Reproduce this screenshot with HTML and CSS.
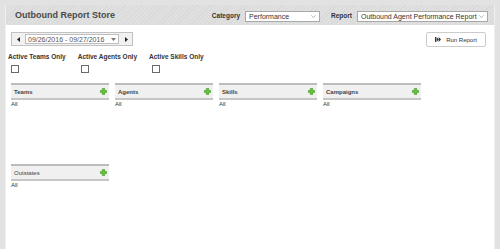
FILE: index.html
```html
<!DOCTYPE html>
<html lang="en">
<head>
  <meta charset="UTF-8">
  <meta name="viewport" content="width=device-width, initial-scale=1.0">
  <title>Outbound Report Store</title>
  <link rel="stylesheet" href="styles.css">
</head>
<body>
  <div class="page">
    <!-- Header -->
    <header class="store-header">
      <h1>Outbound Report Store</h1>
      <div class="pickers">
        <span class="pick-label">Category</span>
        <div class="select select-category">
          <span>Performance</span>
          <svg class="chev" width="5" height="3" viewBox="0 0 5 3"><polyline points="0.3,0.3 2.5,2.6 4.7,0.3" fill="none" stroke="#9a9a9a" stroke-width="0.7"/></svg>
        </div>
        <span class="pick-label">Report</span>
        <div class="select select-report">
          <span>Outbound Agent Performance Report</span>
          <svg class="chev" width="5" height="3" viewBox="0 0 5 3"><polyline points="0.3,0.3 2.5,2.6 4.7,0.3" fill="none" stroke="#9a9a9a" stroke-width="0.7"/></svg>
        </div>
      </div>
    </header>

    <!-- Date range + run -->
    <div class="toolbar">
      <div class="date-range">
        <button class="step" type="button">
          <svg width="3" height="5" viewBox="0 0 3 5"><polygon points="3,0 0,2.5 3,5" fill="#222"/></svg>
        </button>
        <div class="date-select">
          <span>09/26/2016 - 09/27/2016</span>
          <svg class="caret" width="5" height="3" viewBox="0 0 5 3"><polygon points="0,0 5,0 2.5,3" fill="#777"/></svg>
        </div>
        <button class="step" type="button">
          <svg width="3" height="5" viewBox="0 0 3 5"><polygon points="0,0 3,2.5 0,5" fill="#222"/></svg>
        </button>
      </div>
      <button class="run-btn" type="button">
        <svg width="6" height="5" viewBox="0 0 6 5"><rect x="0" y="0" width="1" height="5" fill="#333"/><polygon points="1.5,0 3.8,2.5 1.5,5" fill="#333"/><polygon points="3.7,0 6,2.5 3.7,5" fill="#333"/></svg>
        Run Report
      </button>
    </div>

    <!-- Filtros -->
    <div class="filters">
      <div class="filter">
        <span class="filter-label">Active Teams Only</span>
        <span class="check"></span>
      </div>
      <div class="filter">
        <span class="filter-label">Active Agents Only</span>
        <span class="check"></span>
      </div>
      <div class="filter">
        <span class="filter-label">Active Skills Only</span>
        <span class="check"></span>
      </div>
    </div>

    <!-- Paneles -->
    <div class="panels">
      <div class="panel">
        <div class="panel-head"><b>Teams</b><svg class="plus" width="7" height="7" viewBox="0 0 7 7"><path d="M2.4 0.4h2.2v2h2v2.2h-2v2h-2.2v-2h-2v-2.2h2z" fill="#63c23a" stroke="#3f941f" stroke-width="0.6"/></svg></div>
        <div class="panel-body">All</div>
      </div>
      <div class="panel">
        <div class="panel-head"><b>Agents</b><svg class="plus" width="7" height="7" viewBox="0 0 7 7"><path d="M2.4 0.4h2.2v2h2v2.2h-2v2h-2.2v-2h-2v-2.2h2z" fill="#63c23a" stroke="#3f941f" stroke-width="0.6"/></svg></div>
        <div class="panel-body">All</div>
      </div>
      <div class="panel">
        <div class="panel-head"><b>Skills</b><svg class="plus" width="7" height="7" viewBox="0 0 7 7"><path d="M2.4 0.4h2.2v2h2v2.2h-2v2h-2.2v-2h-2v-2.2h2z" fill="#63c23a" stroke="#3f941f" stroke-width="0.6"/></svg></div>
        <div class="panel-body">All</div>
      </div>
      <div class="panel">
        <div class="panel-head"><b>Campaigns</b><svg class="plus" width="7" height="7" viewBox="0 0 7 7"><path d="M2.4 0.4h2.2v2h2v2.2h-2v2h-2.2v-2h-2v-2.2h2z" fill="#63c23a" stroke="#3f941f" stroke-width="0.6"/></svg></div>
        <div class="panel-body">All</div>
      </div>
      <div class="panel">
        <div class="panel-head"><span>Outstates</span><svg class="plus" width="7" height="7" viewBox="0 0 7 7"><path d="M2.4 0.4h2.2v2h2v2.2h-2v2h-2.2v-2h-2v-2.2h2z" fill="#63c23a" stroke="#3f941f" stroke-width="0.6"/></svg></div>
        <div class="panel-body">All</div>
      </div>
    </div>
  </div>
</body>
</html>
```

FILE: styles.css
```css
/* General */
* {
  box-sizing: border-box;
}
body {
  font-family: "Liberation Sans", Arial, sans-serif;
  margin: 0;
  padding: 0;
  background-color: #e2e2e2;
  color: #333;
}
.page {
  margin: 5px 5px 0 5px;
  min-height: calc(100vh - 5px);
  background-color: #ffffff;
  border-left: 1px solid #f0f0f0;
  border-right: 1px solid #f0f0f0;
}
/* Encabezado */
.store-header {
  height: 20px;
  display: flex;
  align-items: center;
  justify-content: space-between;
  padding: 0 6px 0 9px;
  background-color: #dddddd;
  background-image: repeating-linear-gradient(135deg, #d9d9d9 0 1px, #e0e0e0 1px 3px);
}
.store-header h1 {
  margin: 0;
  font-size: 9px;
  font-weight: bold;
  color: #4a4a4a;
}
.pickers {
  display: flex;
  align-items: center;
}
.pick-label {
  font-size: 6.5px;
  font-weight: bold;
  color: #333;
  margin-right: 5px;
}
.select {
  height: 11px;
  margin-top: 2px;
  display: flex;
  align-items: center;
  justify-content: space-between;
  padding: 0 3px 0 3px;
  background-color: #ffffff;
  border: 1px solid #a8a8a8;
  font-size: 7px;
  color: #333;
}
.select-category {
  width: 75px;
  margin-right: 11px;
}
.select-report {
  width: 131px;
}
.chev {
  display: block;
}
/* Barra de fecha */
.toolbar {
  display: flex;
  justify-content: space-between;
  align-items: flex-start;
  padding: 7px 8px 0 5px;
}
.date-range {
  display: flex;
  align-items: stretch;
  width: 122px;
  height: 14px;
  background-color: #f1f1f1;
  border: 1px solid #c2c2c2;
}
.step {
  width: 12px;
  padding: 0;
  border: none;
  background: transparent;
  display: flex;
  align-items: center;
  justify-content: center;
}
.step svg {
  display: block;
}
.date-select {
  flex: 1;
  margin: 1px;
  display: flex;
  align-items: center;
  justify-content: space-between;
  padding: 0 2px 0 2px;
  background-color: #ffffff;
  border: 1px solid #bdbdbd;
  font-size: 7px;
  color: #555;
}
.caret {
  display: block;
}
.run-btn {
  width: 60px;
  height: 15px;
  display: flex;
  align-items: center;
  justify-content: center;
  gap: 5px;
  padding: 0;
  background-color: #ffffff;
  border: 1px solid #cccccc;
  border-radius: 2px;
  font-family: "Liberation Sans", Arial, sans-serif;
  font-size: 6px;
  color: #333;
}
/* Filtros */
.filters {
  display: flex;
  gap: 12px;
  padding: 6px 0 0 2px;
}
.filter {
  display: flex;
  flex-direction: column;
}
.filter-label {
  font-size: 6.5px;
  font-weight: bold;
  line-height: 8px;
  color: #333;
}
.check {
  width: 8px;
  height: 8px;
  margin: 4px 0 0 3px;
  border: 1px solid #6a6a6a;
  background-color: #ffffff;
}
/* Paneles */
.panels {
  display: grid;
  grid-template-columns: repeat(4, 98px);
  column-gap: 6px;
  row-gap: 6px;
  padding: 10px 0 0 5px;
}
.panel {
  height: 75px;
}
.panel-head {
  height: 17px;
  display: flex;
  align-items: center;
  justify-content: space-between;
  padding: 0 2px 0 3px;
  background-color: #f0f0f0;
  border-top: 2px solid #bcbcbc;
  border-bottom: 2px solid #c6c6c6;
  font-size: 6px;
  color: #444;
}
.plus {
  display: block;
}
.panel-body {
  font-size: 6px;
  line-height: 8px;
  color: #333;
}
```
